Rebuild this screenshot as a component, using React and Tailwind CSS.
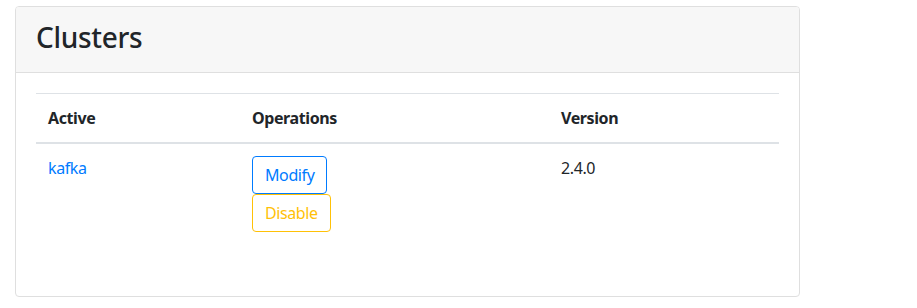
const clusters = [{ name: "kafka", version: "2.4.0" }];

const App = () => {
  return (
    <div className="w-[917px] h-[308px] bg-white pt-[6px] pl-[15px] text-[#212529] text-[16px] leading-6 tracking-[-0.4px]" style={{ fontFamily: '"Noto Sans", "Open Sans", sans-serif' }}>
      <div className="w-[785px] h-[291px] border border-[#dfdfdf] rounded-[4px] flex flex-col">
        {/* Header */}
        <div className="bg-[#f7f7f7] border-b border-[#dfdfdf] px-5 pt-[14px] pb-3 rounded-t-[3px]">
          <h3 className="text-[28px] leading-[33px] font-medium mb-[6px] tracking-[-0.3px]">Clusters</h3>
        </div>

        {/* Body */}
        <div className="p-5">
          <table className="w-full border-collapse">
            <thead>
              <tr className="border-t border-[#dee2e6]">
                <th className="w-[204px] text-left font-bold p-3 border-b-2 border-[#dee2e6]">Active</th>
                <th className="w-[309px] text-left font-bold p-3 border-b-2 border-[#dee2e6]">Operations</th>
                <th className="text-left font-bold p-3 border-b-2 border-[#dee2e6]">Version</th>
              </tr>
            </thead>
            <tbody>
              {clusters.map((c) => (
                <tr key={c.name}>
                  <td className="p-3 align-top">
                    <a className="text-[#007bff]" href="#">{c.name}</a>
                  </td>
                  <td className="p-3 align-top">
                    <div className="flex flex-col items-start">
                      <button className="border border-[#007bff] text-[#007bff] rounded-[4px] px-3 py-[6px] leading-6">Modify</button>
                      <button className="border border-[#ffc107] text-[#ffc107] rounded-[4px] px-3 py-[6px] leading-6">Disable</button>
                    </div>
                  </td>
                  <td className="p-3 align-top">{c.version}</td>
                </tr>
              ))}
            </tbody>
          </table>
        </div>
      </div>
    </div>
  );
};

export default App;
